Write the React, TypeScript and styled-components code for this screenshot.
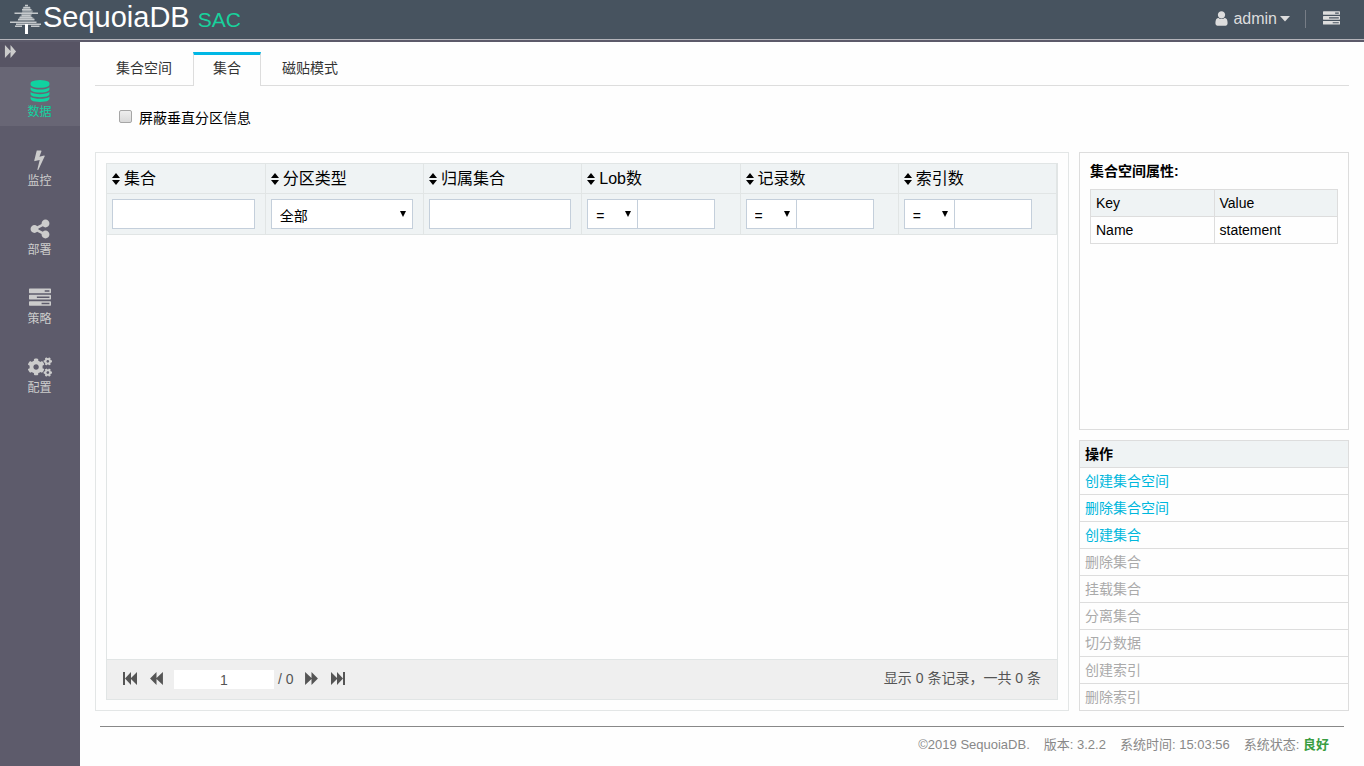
import React from 'react';
import styled, { createGlobalStyle } from 'styled-components';
import { FaCogs } from 'react-icons/fa';

const GlobalStyle = createGlobalStyle`
  *, *::before, *::after { box-sizing: border-box; }
  body {
    margin: 0;
    background: #fefefe;
    color: #000;
    font-family: "Liberation Sans", Arial, "Noto Sans CJK SC", sans-serif;
    font-size: 14px;
    line-height: 20px;
  }
  button, input, select { font: inherit; color: inherit; margin: 0; border-radius: 0; }
  button { background: none; border: 0; padding: 0; cursor: pointer; }
  a { color: inherit; text-decoration: none; }
  svg { display: block; flex: none; }
`;

const Page = styled.div`
  display: flex;
  flex-direction: column;
  min-height: 100vh;
`;

const Header = styled.header`
  display: flex;
  align-items: center;
  justify-content: space-between;
  height: 42px;
  padding: 0 24px 3px 10px;
  background: #47535f;
  border-bottom: 2px solid #5c5a6a;
  box-shadow: inset 0 -1px #b4b4ba;
`;

const Brand = styled.a`
  display: flex;
  align-items: baseline;
  color: #fff;
  font-size: 29px;
  line-height: 34px;

  svg { align-self: center; margin-right: 2px; }
`;

const Product = styled.span`
  margin-left: 8px;
  color: #18d29c;
  font-size: 21px;
`;

const HeaderTools = styled.div`
  display: flex;
  align-items: center;
  color: #ddd;
`;

const UserButton = styled.button`
  display: flex;
  align-items: center;
  gap: 3px;
  padding-right: 15px;
  border-right: 1px solid #777d86;
  font-size: 16px;
  line-height: 18px;
`;

const ToolButton = styled.button`
  margin-left: 17px;
`;

const Body = styled.div`
  display: flex;
  flex: 1;
`;

const Sidebar = styled.nav`
  display: flex;
  flex-direction: column;
  gap: 10px;
  flex: none;
  width: 80px;
  background: #5d5b6b;
  color: #ccc;
`;

const ExpandButton = styled.button`
  height: 25px;
  margin-bottom: -10px;
  padding: 0 0 7px 4px;
  background: #575464;
`;

const NavItem = styled.a<{ $active?: boolean }>`
  display: flex;
  flex-direction: column;
  align-items: center;
  height: 59px;
  padding: 12px 1px 0 0;
  background: ${p => (p.$active ? '#686675' : 'transparent')};
  color: ${p => (p.$active ? '#10d3a0' : '#ccc')};
  font-size: 12px;
  line-height: 20px;
`;

const NavIcon = styled.span`
  display: flex;
  align-items: center;
  height: 23px;
`;

const Content = styled.div`
  display: flex;
  flex-direction: column;
  flex: 1;
  min-width: 0;
  padding: 10px 15px 0;
`;

const Tabs = styled.div`
  display: flex;
  height: 34px;
  box-shadow: inset 0 -1px #ddd;
`;

const Tab = styled.button<{ $active?: boolean }>`
  padding: ${p => (p.$active ? '0 19px 5px' : '0 21px 2px')};
  border: ${p => (p.$active ? '1px solid #ddd' : '0')};
  border-width: ${p => (p.$active ? '0 1px' : '0')};
  border-top: ${p => (p.$active ? '3px solid #00b7e5' : '0')};
  background: ${p => (p.$active ? '#fefefe' : 'transparent')};
  color: #333;
`;

const Options = styled.div`
  display: flex;
  align-items: center;
  gap: 7px;
  height: 66px;
  padding: 0 0 2px 24px;

  label { line-height: 22px; }
`;

const CheckBox = styled.input`
  appearance: none;
  width: 13px;
  height: 13px;
  margin-bottom: 4px;
  border: 1px solid #a6a6a6;
  border-radius: 2px;
  background: linear-gradient(#eee, #d9d9d9);
`;

const Columns = styled.div`
  display: flex;
  gap: 10px;
  flex: 1;
`;

const Panel = styled.section`
  display: flex;
  flex-direction: column;
  flex: 1;
  min-width: 0;
  padding: 10px;
  border: 1px solid #e3e6e6;
`;

const Grid = styled.div`
  display: flex;
  flex-direction: column;
  flex: 1;
  border: 1px solid #e1e5e5;
  border-top: 0;
`;

const GridTable = styled.table`
  width: 100%;
  table-layout: fixed;
  border-collapse: collapse;
  background: #eff3f4;

  th, td {
    border: 1px solid #e1e5e5;
    border-left-width: 0;
    text-align: left;
    font-weight: normal;
  }
  th { height: 30px; padding: 0 5px; font-size: 16px; }
  td { height: 41px; padding: 5px 10px 5px 5px; }
`;

const SortButton = styled.button`
  display: flex;
  align-items: center;
  gap: 4px;
`;

const TextBox = styled.input`
  display: block;
  width: 100%;
  height: 30px;
  padding: 4px 8px;
  border: 1px solid #c4cfdb;
  background: #fff;
`;

const SelectBox = styled.span`
  position: relative;
  display: block;
  width: 100%;

  svg { position: absolute; right: 7px; top: 12px; pointer-events: none; }
`;

const Select = styled.select`
  appearance: none;
  display: block;
  width: 100%;
  height: 30px;
  padding: 3px 8px 0;
  border: 1px solid #c4cfdb;
  background: #fff;
`;

const NumberFilter = styled.div`
  display: flex;
  width: 128px;

  ${SelectBox} { flex: none; width: 51px; }
  ${TextBox} { flex: 1; min-width: 0; border-left: 0; }
`;

const GridBody = styled.div`
  flex: 1;
`;

const Pager = styled.div`
  display: flex;
  align-items: center;
  height: 40px;
  padding: 0 16px 3px 15px;
  border-top: 1px solid #e1e5e5;
  background: #efefef;
  color: #555;
`;

const PagerButton = styled.button`
  display: flex;
  justify-content: center;
  width: 16px;
  margin-right: 10px;
`;

const PageInput = styled.input`
  width: 100px;
  height: 19px;
  margin: 3px 4px 0 0;
  padding: 0;
  border: 0;
  background: #fff;
  text-align: center;
`;

const PageTotal = styled.span`
  margin: 2px 10px 0 0;
`;

const PagerSummary = styled.span`
  margin-left: auto;
`;

const Side = styled.aside`
  display: flex;
  flex-direction: column;
  gap: 10px;
  flex: none;
  width: 270px;
`;

const Properties = styled.section`
  flex: 1;
  padding: 8px 10px;
  border: 1px solid #ddd;
`;

const SideTitle = styled.h2`
  margin: 0 0 8px;
  font-size: 14px;
  line-height: 20px;
`;

const PropertyTable = styled.table`
  width: 100%;
  table-layout: fixed;
  border-collapse: collapse;

  th, td {
    height: 27px;
    padding: 0 5px;
    border: 1px solid #ddd;
    text-align: left;
    font-weight: normal;
  }
  th { background: #eff3f4; }
`;

const Operations = styled.section`
  border: 1px solid #ddd;
`;

const OperationsTitle = styled.h2`
  margin: 0;
  padding: 0 5px;
  background: #eff3f4;
  font-size: 14px;
  line-height: 26px;
`;

const Operation = styled.button`
  display: block;
  width: 100%;
  padding: 0 5px;
  border-top: 1px solid #ddd;
  color: #00b7dc;
  line-height: 26px;
  text-align: left;

  &:disabled { color: #aaa; cursor: default; }
`;

const Footer = styled.footer`
  display: flex;
  justify-content: flex-end;
  gap: 14px;
  height: 40px;
  margin: 15px 5px 0;
  padding: 8px 15px 0;
  border-top: 1px solid #888;
  color: #888;
  font-size: 13px;

  strong { color: #3a9d42; }
`;

const Glyph = ({ d, size, box = '0 0 1792 1792' }: { d: string; size: number; box?: string }) => (
  <svg width={size} height={size} viewBox={box} fill="currentColor" aria-hidden="true">
    <path d={d} />
  </svg>
);

const DATABASE =
  'M768 768q237 0 443-43t325-127v170q0 69-103 128t-280 93.500-385 34.500-385-34.500-280-93.500-103-128v-170q119 84 325 127t443 43zm0 768q237 0 443-43t325-127v170q0 69-103 128t-280 93.500-385 34.500-385-34.500-280-93.500-103-128v-170q119 84 325 127t443 43zm0-384q237 0 443-43t325-127v170q0 69-103 128t-280 93.500-385 34.500-385-34.500-280-93.500-103-128v-170q119 84 325 127t443 43zm0-1152q208 0 385 34.500t280 93.500 103 128v128q0 69-103 128t-280 93.500-385 34.500-385-34.500-280-93.500-103-128v-128q0-69 103-128t280-93.500 385-34.500z';
const BOLT =
  'M1333 566q18 20 7 44l-540 1157q-13 25-42 25-4 0-14-2-17-5-25.500-19t-4.500-30l197-808-406 101q-4 1-12 1-18 0-31-11-18-15-13-39l201-825q4-14 16-23t28-9h328q19 0 32 12.500t13 29.500q0 8-5 18l-171 463 396-98q8-2 12-2 19 0 34 15z';
const SHARE =
  'M1344 1024q133 0 226.500 93.500t93.500 226.500-93.500 226.500-226.500 93.500-226.500-93.500-93.500-226.500q0-12 2-34l-360-180q-92 86-218 86-133 0-226.500-93.500t-93.500-226.500 93.500-226.500 226.500-93.500q126 0 218 86l360-180q-2-22-2-34 0-133 93.500-226.500t226.500-93.500 226.500 93.500 93.500 226.500-93.500 226.500-226.500 93.500q-126 0-218-86l-360 180q2 22 2 34t-2 34l360 180q92-86 218-86z';
const TASKS =
  'M1024 1408h640v-128h-640v128zm-384-512h1024v-128h-1024v128zm640-512h384v-128h-384v128zm512 832v256q0 26-19 45t-45 19h-1664q-26 0-45-19t-19-45v-256q0-26 19-45t45-19h1664q26 0 45 19t19 45zm0-512v256q0 26-19 45t-45 19h-1664q-26 0-45-19t-19-45v-256q0-26 19-45t45-19h1664q26 0 45 19t19 45zm0-512v256q0 26-19 45t-45 19h-1664q-26 0-45-19t-19-45v-256q0-26 19-45t45-19h1664q26 0 45 19t19 45z';
const USER =
  'M1536 1399q0 109-62.500 187t-150.500 78h-854q-88 0-150.500-78t-62.500-187q0-85 8.500-160.500t31.500-152 58.500-131 94-89 134.500-34.500q131 128 313 128t313-128q76 0 134.500 34.500t94 89 58.500 131 31.500 152 8.500 160.500zm-256-887q0 159-112.500 271.500t-271.500 112.500-271.500-112.500-112.500-271.500 112.500-271.500 271.500-112.500 271.500 112.500 112.500 271.500z';

const TreeLogo = () => (
  <svg width="31" height="31" viewBox="0 0 31 31" fill="none" aria-hidden="true">
    <path d="M13 4h7.500v3.500H23L21 14h2l1.500 3.500h-17L10 14l2-4z" fill="#8e969d" />
    <path
      d="M15 2.500h3M13.500 4.500H20M12 6.800h9.500M4.500 10.300H28M12 12.500h8.500M9.500 14.500H22M8 16.500h16.500M0 19.200h26.500M6 21.200h25M5 23.200h7M21 23.200h8.500"
      stroke="#c5c9cc"
      strokeWidth="1.400"
    />
    <path d="M16.500 21v10" stroke="#fff" strokeWidth="3" />
  </svg>
);

const Forward = ({ flip, bar, size = 15 }: { flip?: boolean; bar?: boolean; size?: number }) => (
  <svg
    width={bar ? 16 : size}
    height="13"
    viewBox={bar ? '0 0 16 12' : '0 0 14 12'}
    preserveAspectRatio="none"
    fill="currentColor"
    aria-hidden="true"
  >
    <g transform={flip ? `translate(${bar ? 16 : 14} 0) scale(-1 1)` : undefined}>
      <path d="M1 0l6 5.500V0l6 6-6 6V6.500L1 12z" />
      {bar && <path d="M13 0h2v12h-2z" />}
    </g>
  </svg>
);

const SortIcon = () => (
  <svg width="8" height="12" viewBox="0 0 8 12" fill="currentColor" aria-hidden="true">
    <path d="M4 0l4 5H0zM0 7h8l-4 5z" />
  </svg>
);

const SelectArrow = () => (
  <svg width="6" height="6" viewBox="0 0 6 6" fill="currentColor" aria-hidden="true">
    <path d="M0 0h6L3 6z" />
  </svg>
);

const navigation = [
  { label: '数据', icon: <Glyph d={DATABASE} size={22} box="-128 0 1792 1792" />, active: true },
  { label: '监控', icon: <Glyph d={BOLT} size={21} /> },
  { label: '部署', icon: <Glyph d={SHARE} size={22} /> },
  { label: '策略', icon: <Glyph d={TASKS} size={22} /> },
  { label: '配置', icon: <FaCogs size={24} /> },
];

const columns: { label: string; kind: 'text' | 'select' | 'number' }[] = [
  { label: '集合', kind: 'text' },
  { label: '分区类型', kind: 'select' },
  { label: '归属集合', kind: 'text' },
  { label: 'Lob数', kind: 'number' },
  { label: '记录数', kind: 'number' },
  { label: '索引数', kind: 'number' },
];

const operations = [
  { label: '创建集合空间', enabled: true },
  { label: '删除集合空间', enabled: true },
  { label: '创建集合', enabled: true },
  { label: '删除集合' },
  { label: '挂载集合' },
  { label: '分离集合' },
  { label: '切分数据' },
  { label: '创建索引' },
  { label: '删除索引' },
];

const Dropdown = ({ label, options }: { label: string; options: string[] }) => (
  <SelectBox>
    <Select aria-label={label}>
      {options.map(option => <option key={option}>{option}</option>)}
    </Select>
    <SelectArrow />
  </SelectBox>
);

const Filter = ({ label, kind }: { label: string; kind: string }) => {
  if (kind === 'select') return <Dropdown label={label} options={['全部']} />;
  if (kind === 'text') return <TextBox type="text" aria-label={label} />;
  return (
    <NumberFilter>
      <Dropdown label={`${label} 条件`} options={['=', '>', '<']} />
      <TextBox type="text" aria-label={label} />
    </NumberFilter>
  );
};

export default function App() {
  return (
    <>
      <GlobalStyle />
      <Page>
        <Header>
          <Brand href="#">
            <TreeLogo />
            SequoiaDB
            <Product>SAC</Product>
          </Brand>
          <HeaderTools>
            <UserButton>
              <Glyph d={USER} size={17} />
              admin
              <svg width="10" height="6" viewBox="0 0 10 6" fill="currentColor" aria-hidden="true">
                <path d="M0 0h10L5 5.500z" />
              </svg>
            </UserButton>
            <ToolButton aria-label="任务">
              <Glyph d={TASKS} size={17} />
            </ToolButton>
          </HeaderTools>
        </Header>

        <Body>
          <Sidebar>
            <ExpandButton aria-label="展开">
              <Forward size={13} />
            </ExpandButton>
            {navigation.map(item => (
              <NavItem key={item.label} href="#" $active={item.active}>
                <NavIcon>{item.icon}</NavIcon>
                {item.label}
              </NavItem>
            ))}
          </Sidebar>

          <Content>
            <Tabs role="tablist">
              <Tab role="tab">集合空间</Tab>
              <Tab role="tab" aria-selected $active>集合</Tab>
              <Tab role="tab">磁贴模式</Tab>
            </Tabs>

            <Options>
              <CheckBox type="checkbox" id="hide-partitions" />
              <label htmlFor="hide-partitions">屏蔽垂直分区信息</label>
            </Options>

            <Columns>
              <Panel>
                <Grid>
                  <GridTable>
                    <thead>
                      <tr>
                        {columns.map(column => (
                          <th key={column.label}>
                            <SortButton><SortIcon />{column.label}</SortButton>
                          </th>
                        ))}
                      </tr>
                    </thead>
                    <tbody>
                      <tr>
                        {columns.map(column => (
                          <td key={column.label}><Filter {...column} /></td>
                        ))}
                      </tr>
                    </tbody>
                  </GridTable>
                  <GridBody />
                  <Pager>
                    <PagerButton aria-label="首页"><Forward flip bar /></PagerButton>
                    <PagerButton aria-label="上一页"><Forward flip /></PagerButton>
                    <PageInput type="text" aria-label="页码" defaultValue="1" />
                    <PageTotal>/ 0</PageTotal>
                    <PagerButton aria-label="下一页"><Forward /></PagerButton>
                    <PagerButton aria-label="末页"><Forward bar /></PagerButton>
                    <PagerSummary>显示 0 条记录，一共 0 条</PagerSummary>
                  </Pager>
                </Grid>
              </Panel>

              <Side>
                <Properties>
                  <SideTitle>集合空间属性:</SideTitle>
                  <PropertyTable>
                    <thead>
                      <tr><th>Key</th><th>Value</th></tr>
                    </thead>
                    <tbody>
                      <tr><td>Name</td><td>statement</td></tr>
                    </tbody>
                  </PropertyTable>
                </Properties>
                <Operations>
                  <OperationsTitle>操作</OperationsTitle>
                  {operations.map(item => (
                    <Operation key={item.label} disabled={!item.enabled}>{item.label}</Operation>
                  ))}
                </Operations>
              </Side>
            </Columns>

            <Footer>
              <span>©2019 SequoiaDB.</span>
              <span>版本: 3.2.2</span>
              <span>系统时间: 15:03:56</span>
              <span>系统状态: <strong>良好</strong></span>
            </Footer>
          </Content>
        </Body>
      </Page>
    </>
  );
}
